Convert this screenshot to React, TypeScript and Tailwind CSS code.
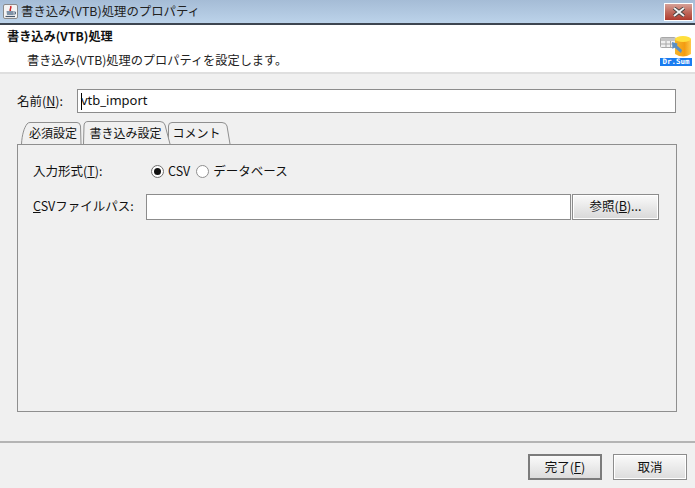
const font = "[font-family:'Noto_Sans_CJK_JP','Noto_Sans',sans-serif]";

function Tab({ w, h, active, label, cls, path }: { w: number; h: number; active?: boolean; label: string; cls: string; path: string }) {
  return (
    <div className={`relative flex items-center justify-center ${cls} ${active ? "z-10" : ""}`} style={{ width: w, height: h }}>
      <svg className="absolute left-0 top-0 overflow-visible" width={w} height={h}>
        <path d={path} fill="#f0f0f0" stroke="#8f8f8f" strokeWidth="1" />
      </svg>
      <span className="relative text-[12px] leading-none text-[#111]">{label}</span>
    </div>
  );
}

function BtnText({ a, k, b }: { a: string; k: string; b: string }) {
  return (
    <span>
      {a}
      <span className="underline">{k}</span>
      {b}
    </span>
  );
}

export default function App() {
  return (
    <div className={`flex h-[488px] w-[695px] flex-col overflow-hidden bg-[#f0f0f0] text-[12.5px] text-[#111] ${font}`}>
      {/* title bar */}
      <div className="flex h-[25px] shrink-0 items-center border-b-2 border-[#3d4550] bg-gradient-to-b from-[#a5bcd6] to-[#bcd3ea] pl-[3px] pr-[2px]">
        <svg width="15" height="15" viewBox="0 0 15 15" className="mr-[3px] shrink-0">
          <rect x="0.5" y="0.5" width="14" height="14" rx="1.5" fill="#f4f4f4" stroke="#8a8a8a" />
          <path d="M7.5 2 C9 4 6 5 7.5 7.5" stroke="#d02828" strokeWidth="1.6" fill="none" />
          <path d="M3.5 7 H10.5 L10 11 H4 Z" fill="#7f93a8" />
          <path d="M10.5 8 H12.5 V10 H10" stroke="#5b6f85" fill="none" />
          <path d="M2.5 12.5 H12" stroke="#46586c" strokeWidth="1.2" />
        </svg>
        <span className="text-[12.4px] leading-none text-[#222]">書き込み(VTB)処理のプロパティ</span>
        <div className="ml-auto flex h-[18px] w-[29px] items-center justify-center border border-white bg-gradient-to-b from-[#d6a097] via-[#c0695c] to-[#b03a2e]">
          <svg width="14" height="10" viewBox="0 0 14 10">
            <path d="M2 1 L12 9 M12 1 L2 9" stroke="#3d3d3d" strokeWidth="3.6" />
            <path d="M2 1 L12 9 M12 1 L2 9" stroke="#f2f2f2" strokeWidth="2" />
          </svg>
        </div>
      </div>

      {/* header */}
      <div className="flex h-[49px] shrink-0 border-b-2 border-[#dfdfdf] bg-white">
        <div className="flex-1 pl-[7px] pt-[2px]">
          <div className="text-[12.2px] font-bold leading-[18px]">書き込み(VTB)処理</div>
          <div className="pl-[20px] pt-[6px] text-[12.2px] leading-[18px] text-[#222]">書き込み(VTB)処理のプロパティを設定します。</div>
        </div>
        <div className="flex w-[35px] shrink-0 flex-col items-start pt-[11px]">
          <svg width="32" height="22" viewBox="0 0 32 22" className="shrink-0">
            <defs>
              <linearGradient id="cyl" x1="0" x2="1" y1="0" y2="0">
                <stop offset="0" stopColor="#f7b52a" />
                <stop offset="0.6" stopColor="#f39c12" />
                <stop offset="1" stopColor="#ffc94a" />
              </linearGradient>
            </defs>
            <rect x="0.5" y="1.5" width="15" height="10" rx="1" fill="#f0f0f0" stroke="#a8a8a8" />
            <rect x="1" y="2" width="14" height="3" fill="#c4c4c4" />
            <path d="M1 8 H15 M6 5 V11 M10.5 5 V11" stroke="#a8a8a8" />
            <path d="M15 3 V18 Q23 23 31 18 V3 Z" fill="url(#cyl)" />
            <ellipse cx="23" cy="3" rx="8" ry="3" fill="#ffdf3d" />
            <path d="M12 6 L17.5 7.5 L17 9.5 L22 14 L21 17 L14.5 11.5 L12.5 13 Z" fill="#5b8fc4" />
          </svg>
          <div className="flex h-[8px] w-[32px] items-center justify-center overflow-hidden bg-[#1a7cf0] text-[7.5px] font-bold leading-none text-white [font-family:'DejaVu_Sans_Mono',monospace]">Dr.Sum</div>
        </div>
      </div>

      {/* name row */}
      <div className="flex shrink-0 items-center pl-[17px] pr-[19px] pt-[15px]">
        <span className="w-[60px] shrink-0">名前(<span className="underline">N</span>):</span>
        <div className="flex h-[24px] flex-1 items-center border border-[#8c8c8c] bg-white pl-[3px] text-[13px] [font-family:'Noto_Sans',sans-serif]">
          <span className="mr-[-1px] h-[17px] w-px shrink-0 bg-black" />
          <span>vtb_import</span>
        </div>
      </div>

      {/* tabs */}
      <div className="flex shrink-0 items-end pl-[21px] pt-[8px]">
        <Tab w={60} h={22} label="必須設定" cls="pl-[4px]" path="M0.5 22 C1 13 3 6 6 2 Q7 0.5 9 0.5 H56 Q59 0.5 59.5 4 L60 22" />
        <Tab w={85} h={23} active label="書き込み設定" cls="ml-[2px]" path="M0.5 23 L1 5 Q1 0.5 5 0.5 H77 Q81 0.5 82 4 L87 23" />
        <Tab w={62} h={22} label="コメント" cls="pr-[5px]" path="M0.5 22 V4 Q0.5 0.5 4 0.5 H54 Q58 0.5 59 4 L62 22" />
      </div>

      {/* panel */}
      <div className="ml-[17px] flex h-[268px] w-[660px] shrink-0 flex-col border border-[#8f8f8f] pl-[15px] pr-[17px]">
        <div className="flex items-center pt-[17px]">
          <span className="w-[118px] shrink-0">入力形式(<span className="underline">T</span>):</span>
          <span className="flex h-[13px] w-[13px] items-center justify-center rounded-full border border-[#6f6f6f] bg-white">
            <span className="h-[7px] w-[7px] rounded-full bg-[#111]" />
          </span>
          <span className="ml-[4px]">CSV</span>
          <span className="ml-[6px] h-[13px] w-[13px] rounded-full border border-[#8f8f8f] bg-white" />
          <span className="ml-[4px]">データベース</span>
        </div>
        <div className="mt-[13px] flex items-center">
          <span className="w-[113px] shrink-0"><span className="underline">C</span>SVファイルパス:</span>
          <div className="h-[26px] flex-1 border border-[#8c8c8c] bg-white" />
          <button className="ml-[1px] flex h-[26px] w-[87px] items-center justify-center border border-[#8c8c8c] bg-gradient-to-b from-[#fafafa] to-[#d8d8d8] shadow-[inset_0_0_0_1px_#ffffff]">
            <BtnText a="参照(" k="B" b=")..." />
          </button>
        </div>
      </div>

      {/* footer */}
      <div className="mt-[29px] flex flex-1 justify-end gap-[11px] border-t-2 border-[#b4b4b4] pr-[8px] pt-[11px]">
        <button className="flex h-[26px] w-[74px] items-center justify-center border-2 border-[#7c7c7c] bg-gradient-to-b from-[#fafafa] to-[#dcdcdc]">
          <BtnText a="完了(" k="F" b=")" />
        </button>
        <button className="flex h-[26px] w-[74px] items-center justify-center border border-[#8c8c8c] bg-gradient-to-b from-[#fafafa] to-[#dcdcdc] shadow-[inset_0_0_0_1px_#ffffff]">
          取消
        </button>
      </div>
    </div>
  );
}
